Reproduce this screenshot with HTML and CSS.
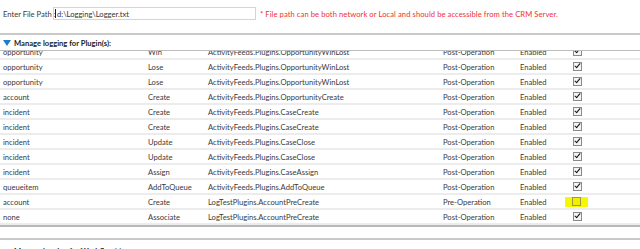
FILE: index.html
```html
<!DOCTYPE html>
<html>
<head>
<meta charset="utf-8">
<link rel="stylesheet" href="styles.css">
</head>
<body>
<div class="filepath">
  <span class="label">Enter File Path :</span>
  <div class="input"><span class="caret"></span>d:\Logging\Logger.txt</div>
  <span class="note">* File path can be both network or Local and should be accessible from the CRM Server.</span>
</div>
<div class="section">
  <div class="sec-head"><span class="tri"></span><span>Manage logging for Plugin(s):</span></div>
  <div class="grid-wrap">
    <div class="grid">
      <div class="row"><span>opportunity</span><span>Win</span><span>ActivityFeeds.Plugins.OpportunityWinLost</span><span>Post-Operation</span><span>Enabled</span><span class="cb on"></span></div>
      <div class="row"><span>opportunity</span><span>Lose</span><span>ActivityFeeds.Plugins.OpportunityWinLost</span><span>Post-Operation</span><span>Enabled</span><span class="cb on"></span></div>
      <div class="row"><span>opportunity</span><span>Lose</span><span>ActivityFeeds.Plugins.OpportunityWinLost</span><span>Post-Operation</span><span>Enabled</span><span class="cb on"></span></div>
      <div class="row"><span>account</span><span>Create</span><span>ActivityFeeds.Plugins.OpportunityCreate</span><span>Post-Operation</span><span>Enabled</span><span class="cb on"></span></div>
      <div class="row"><span>incident</span><span>Create</span><span>ActivityFeeds.Plugins.CaseCreate</span><span>Post-Operation</span><span>Enabled</span><span class="cb on"></span></div>
      <div class="row"><span>incident</span><span>Create</span><span>ActivityFeeds.Plugins.CaseCreate</span><span>Post-Operation</span><span>Enabled</span><span class="cb on"></span></div>
      <div class="row"><span>incident</span><span>Update</span><span>ActivityFeeds.Plugins.CaseClose</span><span>Post-Operation</span><span>Enabled</span><span class="cb on"></span></div>
      <div class="row"><span>incident</span><span>Update</span><span>ActivityFeeds.Plugins.CaseClose</span><span>Post-Operation</span><span>Enabled</span><span class="cb on"></span></div>
      <div class="row"><span>incident</span><span>Assign</span><span>ActivityFeeds.Plugins.CaseAssign</span><span>Post-Operation</span><span>Enabled</span><span class="cb on"></span></div>
      <div class="row"><span>queueitem</span><span>AddToQueue</span><span>ActivityFeeds.Plugins.AddToQueue</span><span>Post-Operation</span><span>Enabled</span><span class="cb on"></span></div>
      <div class="row"><span>account</span><span>Create</span><span>LogTestPlugins.AccountPreCreate</span><span>Pre-Operation</span><span>Enabled</span><span class="cb-hl"><span class="cb off"></span></span></div>
      <div class="row"><span>none</span><span>Associate</span><span>LogTestPlugins.AccountPreCreate</span><span>Post-Operation</span><span>Enabled</span><span class="cb on"></span></div>
    </div>
  </div>
</div>
<div class="section second">
  <div class="sec-head"><span class="tri"></span><span>Manage logging for Workflow(s):</span></div>
</div>
</body>
</html>
```
FILE: styles.css
```css
html, body {
  margin: 0;
  padding: 0;
  background: #fff;
  width: 640px;
  height: 249px;
  overflow: hidden;
  font-family: "Lato", "Liberation Sans", sans-serif;
  font-size: 7.6px;
  color: #3a3a3a;
}
.filepath {
  height: 33px;
  display: flex;
  align-items: center;
  padding: 0 0 6px 3px;
  box-sizing: border-box;
  white-space: nowrap;
}
.label {
  width: 50px;
  flex: none;
}
.input {
  width: 200px;
  height: 11px;
  border: 1px solid #d4d4d4;
  display: flex;
  align-items: center;
  padding-left: 1px;
  color: #333;
  margin-right: 4px;
  flex: none;
}
.caret {
  width: 1px;
  height: 9px;
  background: #222;
  margin-right: 1px;
}
.note {
  color: #f03030;
  letter-spacing: 0.08px;
}
.section {
  border-top: 2px solid #c9c9c9;
}
.sec-head {
  height: 16px;
  display: flex;
  align-items: center;
  gap: 3px;
  padding-left: 3px;
  font-weight: bold;
  color: #222;
  border-bottom: 1px solid #bdbdbd;
  box-sizing: border-box;
}
.tri {
  width: 0;
  height: 0;
  border-left: 4px solid transparent;
  border-right: 4px solid transparent;
  border-top: 6px solid #1f7cc9;
}
.grid-wrap {
  height: 174px;
  overflow: hidden;
  border-bottom: 2px solid #b8b8b8;
}
.grid {
  margin-top: -6px;
}
.row {
  display: grid;
  grid-template-columns: 145px 60px 235px 77px 53px 1fr;
  height: 15px;
  align-items: center;
  padding-left: 3px;
  border-bottom: 2px solid #ececec;
  box-sizing: border-box;
  white-space: nowrap;
}
.cb {
  width: 7px;
  height: 7px;
  border: 1px solid #8a8a8a;
  background: #f4f4f4;
  position: relative;
}
.cb.on::after {
  content: "";
  position: absolute;
  left: 2px;
  top: -1px;
  width: 2px;
  height: 5px;
  border-right: 1.5px solid #111;
  border-bottom: 1.5px solid #111;
  transform: rotate(40deg);
}
.cb-hl {
  justify-self: start;
  margin-left: -8px;
  width: 23px;
  height: 10px;
  background: #f7f700;
  display: flex;
  align-items: center;
  justify-content: center;
}
.cb.off {
  background: #f0f000;
  border-color: #9a9a40;
}
.second {
  margin-top: 11px;
}
.second .sec-head {
  border-bottom: none;
  align-items: flex-end;
}
```
